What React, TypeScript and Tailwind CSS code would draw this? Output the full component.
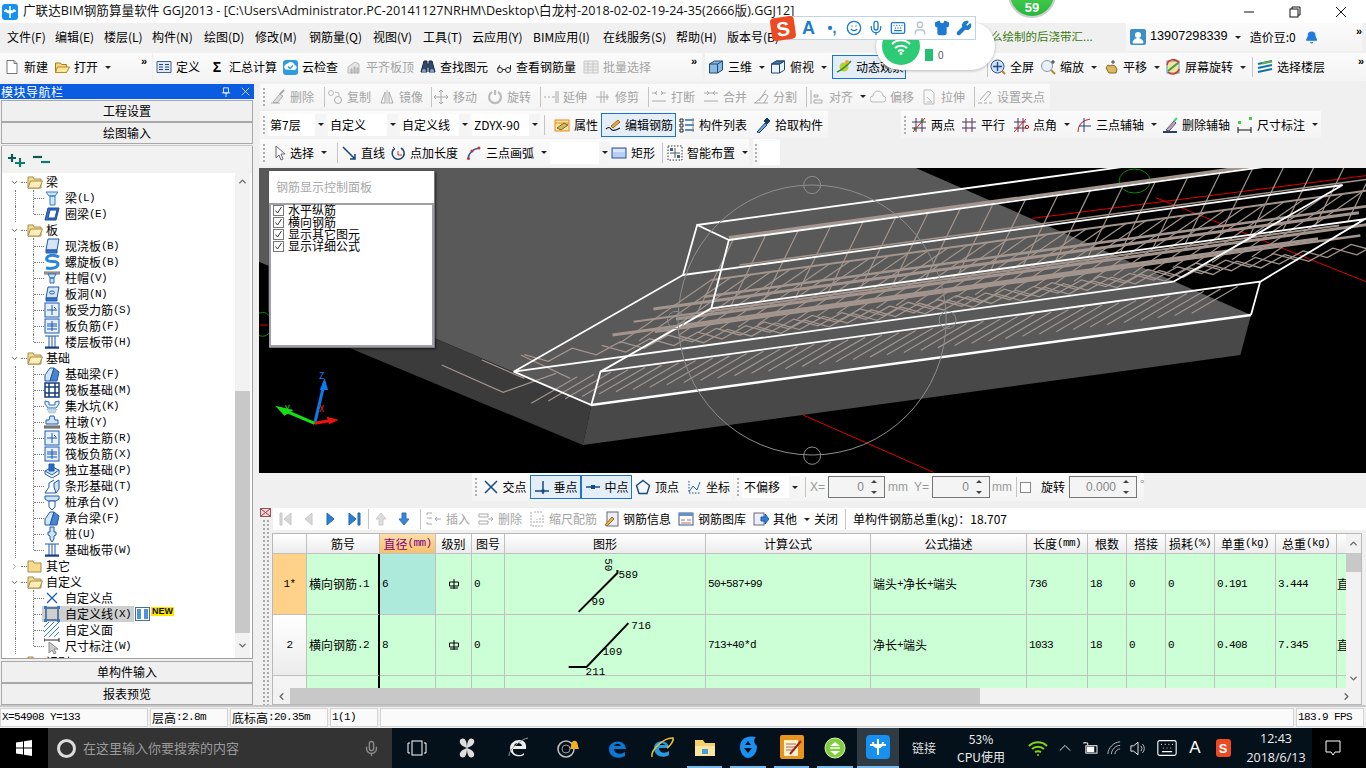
import React from "react";
import { Smile, Mic, Keyboard, Shirt, Wrench, User, Bell, ChevronUp, ChevronDown, ChevronLeft, ChevronRight } from "lucide-react";

const CJK = "'Noto Sans CJK SC','Liberation Sans',sans-serif";
const P = ({ d, c = "#1f5fae", w = 1, f = "none" }: { d: string; c?: string; w?: number; f?: string }) => (
  <path d={d} stroke={c} strokeWidth={w} fill={f} />
);
const ICONS: Record<string, React.ReactNode> = {
  new: <><P d="M3 1.5h7l3 3v10H3z" c="#777" f="#fff" /><P d="M10 1.5v3h3" c="#777" /></>,
  open: <><P d="M1.5 4h5l1 1.5h5v8h-11z" c="#a67c20" f="#f5d77a" /><P d="M3.5 8h12l-3 5.5h-11z" c="#b58a2a" f="#fbe69a" /></>,
  def: <><P d="M1 2.5h14v11H1z" c="#44618c" f="#dfe9f6" /><P d="M3 5.5h4M3 8h4M3 10.5h4M9 5.5h4M9 8h4M9 10.5h4" c="#24406e" /></>,
  cloud: <><rect x="1" y="1" width="15" height="15" rx="3" fill="#2f9ae0" /><P d="M3.5 10a3 3 0 0 1 2-5 4 4 0 0 1 7 1.5 2 2 0 0 1-.5 4z" c="#fff" f="#fff" /><P d="M6 7.5l2 2 3-3" c="#2f9ae0" w={1.3} /></>,
  flat: <><P d="M2 8l7-5 4 2v9H2z" c="#bbb" f="#e4e4e4" /><P d="M5 10h1v4H5zM8 8h1v6H8zM11 9h1v5h-1z" c="#aaa" /></>,
  find: <><P d="M4 2h3v3h2V2h3l3 11H9V8H7v5H1z" c="#1b2a40" f="#33496b" /><circle cx="4" cy="12" r="2" fill="#7da0cc" /><circle cx="12" cy="12" r="2" fill="#7da0cc" /></>,
  see: <><circle cx="4" cy="11" r="2.5" fill="none" stroke="#222" /><circle cx="12" cy="11" r="2.5" fill="none" stroke="#222" /><P d="M6.5 10.5h3M1.5 10L4 6M14.5 10V6" c="#222" /></>,
  batch: <><P d="M1 2h14v12H1z" c="#c8c8c8" f="#eee" /><P d="M1 5h14M1 8h14M1 11h14M5 2v12M10 2v12" c="#c8c8c8" /></>,
  cube: <><P d="M1.5 5l5-3h8v9l-5 3h-8z" c="#24476f" f="#86bbe6" /><P d="M1.5 5h8v9M9.5 5l5-3" c="#24476f" /></>,
  cubew: <><P d="M1.5 5l5-3h8v9l-5 3h-8z" c="#24476f" f="#e7f2fb" /><P d="M1.5 5h8v9M9.5 5l5-3" c="#24476f" /><P d="M1.5 5l5-3h8l-5 3z" c="#24476f" f="#3f78ad" /></>,
  orbit: <><circle cx="8" cy="8" r="4.5" fill="#b8d034" /><P d="M1 13Q8 10 15 2" c="#2f8f3a" w={1.6} /><circle cx="11" cy="3" r="2" fill="#e7a92a" /></>,
  full: <><circle cx="7.5" cy="7.5" r="6.5" fill="#cfe0f5" stroke="#2f548f" /><P d="M7.5 3v9M3 7.5h9" c="#1d4a8a" w={1.4} /><P d="M12 12l3 3" c="#b88824" w={2} /></>,
  zoom: <><circle cx="7" cy="7" r="5.5" fill="#e7f1fb" stroke="#8a97a8" /><P d="M11 11l4 4" c="#b88824" w={2} /><P d="M13 1v4M11 3h4" c="#333" /></>,
  hand: <><P d="M3 9l2-3 2 1 2-1 3 1 2 3-1 4H6z" c="#8c6a22" f="#dcb85f" /><P d="M10 1v4M8 3h4" c="#444" /></>,
  rot: <><rect x="2" y="2" width="12" height="12" fill="#f2e39f" stroke="#4f9bd1" /><P d="M3 12L13 4" c="#3e9f41" w={2} /><P d="M2 6a6.5 6.5 0 0 1 12-2" c="#d5362a" w={1.5} /><P d="M14 10a6.5 6.5 0 0 1-11 3" c="#d5362a" w={1.5} /></>,
  floor: <><P d="M1 5l14-3M1 9l14-3M1 13l14-3" c="#0e72a8" w={2} /><P d="M5 4.5l10-2" c="#6aa84f" w={2} /></>,
  user: <><rect width="16" height="16" rx="2" fill="#3e8fc9" /><circle cx="8" cy="6" r="3" fill="#fff" /><P d="M3 14c0-6 10-6 10 0z" c="#fff" f="#fff" /></>,
  del: <><P d="M1 14h9M3 13l7-8 3 2-6 7z" c="#aaa" f="#ddd" /><P d="M10 5l4-4" c="#aaa" w={2} /></>,
  copy: <><circle cx="4" cy="4" r="2.5" fill="none" stroke="#bbb" /><circle cx="11" cy="11" r="3.5" fill="none" stroke="#aaa" /><P d="M8 3l4 1v3" c="#bbb" /></>,
  mir: <><P d="M2 14L6 3v11zM14 14L10 3v11z" c="#aaa" /><P d="M8 1v14" c="#bbb" /></>,
  move: <P d="M8 1v14M1 8h14M6 3l2-2 2 2M6 13l2 2 2-2M3 6L1 8l2 2M13 6l2 2-2 2" c="#aaa" />,
  spin: <P d="M5 3a6 6 0 1 0 6 0M8 1v5" c="#bbb" w={2.2} />,
  ext: <P d="M1 8h2M5 8h2M9 8h3M13 2v12M15 2v12" c="#aaa" />,
  trim: <P d="M1 8h13M6 2v12M9 2v12M12 5v6" c="#aaa" />,
  brk: <P d="M1 4h5M10 4h5M1 12h14M6 2l-2 2 2 2M10 2l2 2-2 2" c="#aaa" />,
  mrg: <P d="M1 4h14M1 12h14M4 2l2 2-2 2M12 2l-2 2 2 2" c="#aaa" />,
  spl: <P d="M1 14h14M2 14l10-9 3 2-4 7M13 1L6 12" c="#aaa" />,
  ali: <P d="M2 1v14M5 6h4v2H5zM5 11h8v3H5z" c="#aaa" />,
  off: <P d="M3 13a3 3 0 0 1 0-6 5 5 0 0 1 10 0 3 3 0 0 1 0 6z" c="#bbb" />,
  str: <P d="M3 1h7l3 3v11H3zM6 8l5 5M6 13h5" c="#bbb" />,
  gp: <P d="M1 14h4M7 14h3M12 14h3M3 11l8-9 3 2-7 8" c="#aaa" />,
  prop: <><rect x="1" y="3" width="14" height="11" fill="#fde2a0" stroke="#e58a1f" /><P d="M1 6h14" c="#e58a1f" /><P d="M3 11l7-5 4 2-7 5z" c="#7a6a2a" f="#d2b660" /></>,
  edit: <><P d="M1 12q3-3 5 0t9-1" c="#111" w={1.2} /><P d="M6 9l7-6 2 2-7 6z" c="#a67020" f="#e6a540" /></>,
  list: <><P d="M1 2h3v3H1zM1 7h3v3H1zM1 12h3v3H1z" c="#222" /><P d="M6 3h9M6 8h9M6 13h9" c="#2a6cb0" w={1.5} /><P d="M14 1v14" c="#888" /></>,
  pick: <><P d="M2 15l8-9 2 2-8 8z" c="#1d3f74" f="#6fa7de" /><P d="M9 4l3-3 3 3-3 3z" c="#1d3f74" f="#16355f" /></>,
  two: <><P d="M1 5h14M1 11h14" c="#1d3f74" /><P d="M5 1v14M11 1v14" c="#7a2040" /><P d="M2 15L14 1" c="#d22" /><circle cx="4" cy="12" r="1.4" fill="#3a7a2a" /><circle cx="11" cy="4" r="1.4" fill="#3a7a2a" /></>,
  para: <><P d="M1 5h14M1 11h14" c="#1d3f74" /><P d="M5 1v14M11 1v14" c="#7a2040" /></>,
  ang: <><P d="M1 5h12M1 11h12" c="#1d3f74" /><P d="M5 1v14M10 1v14" c="#7a2040" /><P d="M1 15L13 2" c="#d22" /><circle cx="14" cy="10" r="1.6" fill="none" stroke="#c00" /></>,
  arc3: <><P d="M2 15Q2 4 14 2" c="#c22" /><P d="M8 1v14M3 9h12" c="#1d3f74" /></>,
  delx: <><P d="M1 15h14" c="#246" w={2} /><P d="M4 13l8-9 2 2-7 8z" c="#555" f="#c9a0d8" /><P d="M12 4l3-3" c="#3d6" w={2} /></>,
  dim: <><P d="M1 13h13M1 10v6M14 10v6" c="#111" /><rect x="1" y="4" width="3" height="3" fill="#4c4" /><rect x="12" y="0" width="3" height="3" fill="#4c4" /></>,
  arrow: <P d="M4 1v12l3-3 2 5 2-1-2-5h4z" c="#667" f="#fff" />,
  line: <><P d="M2 2l12 12M9 14h5V9" c="#13467c" w={1.5} /></>,
  plen: <><P d="M11 3a6 6 0 1 1-7 1" c="#244a7a" w={1.6} /><P d="M8 6v4h4" c="#c33" /><P d="M3 2l2 2-3 1" c="#244a7a" /></>,
  arc: <><P d="M2 14Q3 5 13 3" c="#2a5a9a" w={1.5} /><circle cx="2.5" cy="13.5" r="1.5" fill="#c33" /><circle cx="6" cy="6" r="1.5" fill="#c33" /><circle cx="13" cy="3" r="1.5" fill="#c33" /></>,
  rect: <><rect x="1" y="3" width="14" height="10" fill="#b8cff4" stroke="#2a4f96" /><rect x="2" y="4" width="12" height="3" fill="#dbe6fa" /></>,
  smart: <><rect x="1" y="1" width="14" height="14" fill="#fff" stroke="#333" strokeDasharray="1.5 1.5" /><P d="M8 3v10M3 8h10" c="#555" /><rect x="3" y="3" width="3" height="3" fill="#3a63a8" /><rect x="10" y="10" width="3" height="3" fill="#3a63a8" /></>,
  cross: <P d="M2 2l12 12M14 2L2 14" c="#134b86" w={1.5} />,
  perp: <><P d="M1 12h14M9 2v13" c="#134b86" w={1.5} /><rect x="7.5" y="10.5" width="3" height="3" fill="#134b86" /></>,
  mid: <><P d="M1 8h14" c="#134b86" w={1.5} /><rect x="6" y="6" width="4" height="4" fill="#134b86" /></>,
  pent: <P d="M8 1.5l6.5 5-2.5 8H4l-2.5-8z" c="#134b86" w={1.4} />,
  coord: <><P d="M3 13l4-6 4 4 3-8" c="#2a6db0" /><path d="M3 2v12h11" stroke="#134b86" fill="none" strokeDasharray="1.5 1.5" /></>,
  first: <><P d="M3 2h2v12H3zM14 2L7 8l7 6z" c="#c8c8c8" f="#d8d8d8" /></>,
  prev: <P d="M12 2L5 8l7 6z" c="#c8c8c8" f="#d8d8d8" />,
  next: <P d="M4 2l7 6-7 6z" c="#1c68b8" f="#2a7fd4" />,
  last: <><P d="M2 2l7 6-7 6zM11 2h2v12h-2z" c="#1c68b8" f="#2a7fd4" /></>,
  up: <P d="M8 2l5 6H10v6H6V8H3z" c="#ccc" f="#ddd" />,
  down: <P d="M6 2h4v6h3l-5 6-5-6h3z" c="#2a6fc0" f="#3a86d8" />,
  ins: <P d="M1 2h5M1 7h5M1 13h5M1 2v2M1 11v2M9 8h6M9 8l2-2M9 8l2 2" c="#aaa" />,
  rm: <P d="M1 3h9v3H1zM1 10h9v3H1zM10 8h5M13 6l2 2-2 2" c="#aaa" />,
  scl: <path d="M2 1v14h13M5 12v-2M8 12V8M11 12V6M14 12V4M5 1h9" stroke="#aaa" fill="none" strokeDasharray="2 1" />,
  info: <><rect x="4" y="1" width="11" height="14" fill="#eef" stroke="#667" /><P d="M2 14l7-8 2 2-7 7z" c="#a06a20" f="#e6b450" /></>,
  lib: <><rect x="1" y="2" width="14" height="12" fill="#fff" stroke="#33588a" /><rect x="1" y="2" width="14" height="3" fill="#6a91c5" /><P d="M3 9h4M9 9h4M3 12h10" c="#b66" /></>,
  other: <><rect x="1" y="2" width="10" height="12" fill="#eef" stroke="#667" /><P d="M8 6h4V3l4 5-4 5v-3H8z" c="#1a5fb0" f="#2f7fd0" /></>,
  tBeam: <><P d="M2 2h12l-3 4H5zM6 6h5v9H6z" c="#2a7fd0" f="#cfe6fb" /></>,
  tRing: <><P d="M4 2h11l-3 12H1z" c="#154a9c" f="#3b71c6" /><P d="M6 4h7l-2 8H4z" c="#154a9c" f="#fff" /></>,
  tSlab: <><P d="M4 1h11l-2 11H2z" c="#1a5bb0" f="#d6e6fa" /><P d="M2 12h11v3H2z" c="#1a5bb0" f="#3b71c6" /></>,
  tSpir: <P d="M15 3C7-1 1 3 3 6s11 0 11 4-6 5-12 4" c="#2a86dd" w={3} />,
  tCap: <><P d="M0 2h16v2H0z" c="#777" f="#aaa" /><P d="M4 4h8l-2 4H6zM6 8h4v5H6z" c="#2a6cc0" f="#cfe2f8" /></>,
  tHole: <><P d="M4 1h11l-2 11H2z" c="#1a5bb0" f="#d6e6fa" /><P d="M2 12h11v3H2z" c="#1a5bb0" f="#3b71c6" /><ellipse cx="8" cy="6.5" rx="2.5" ry="1.5" fill="none" stroke="#1a5bb0" /></>,
  tBar: <><rect x="1" y="1" width="14" height="14" fill="#e6f0fb" stroke="#1a5bb0" /><P d="M8 3v10M3 8h10M10 5l2 2" c="#1a5bb0" /></>,
  tNeg: <><rect x="1" y="1" width="14" height="14" fill="#e6f0fb" stroke="#1a5bb0" /><P d="M3 8h10M3 6h10M8 3v10M3 11h10" c="#1a5bb0" /></>,
  tBand: <><P d="M1 2h14M1 14h14M5 2v12M11 2v12M8 2v12" c="#1a5bb0" /><P d="M1 13.5h14" c="#1a3f80" w={2} /></>,
  tFb: <><P d="M1 15V9l5-7h4L6 15z" c="#1a5bb0" f="#d6e6fa" /><P d="M10 2l5 4-2 9H6z" c="#1a5bb0" f="#4a84d0" /></>,
  tRaft: <><rect x="1" y="1" width="14" height="14" fill="#fff" stroke="#173e7a" strokeWidth="1.5" /><P d="M1 5h14M1 11h14M5 1v14M11 1v14" c="#173e7a" w={1.5} /></>,
  tPit: <><P d="M1 3l4 1v3h6V4l4-1v3l-3 4H4L1 6z" c="#2a6cc0" f="#e6f0fb" /><path d="M3 11h10l-2 4H5z" stroke="#8bb" fill="#c6d8ec" strokeDasharray="1 1" /></>,
  tPier: <><P d="M6 2h4l1 4h3v4H2V6h3z" c="#1a5bb0" f="#cfe2f8" /><P d="M0 12h16v2H0z" c="#555" f="#999" /></>,
  tInd: <><P d="M1 9l7-4 7 3-7 5z" c="#1a5bb0" f="#cfe2f8" /><P d="M1 9v3l7 4 7-4V8" c="#1a5bb0" /><P d="M5 2h5v7H5z" c="#1a5bb0" f="#2a6cc0" /></>,
  tStrip: <><P d="M1 15h11l-2-6V5l5-3v9l-3 4" c="#1a5bb0" f="#cfe2f8" /><P d="M1 15l4-6V5l5-3" c="#1a5bb0" /></>,
  tPile: <><P d="M1 2h14v3l-3 2H4L1 5z" c="#1a5bb0" f="#cfe2f8" /><P d="M5 7h6v6l-3 3-3-3z" c="#1a5bb0" f="#fff" /></>,
  tPin: <><P d="M6 1h4v5h2v3l-2 1v3l-2 3-2-3v-3L4 9V6h2z" c="#1a5bb0" f="#cfe2f8" /></>,
  tPt: <P d="M3 3l10 10M13 3L3 13" c="#1c5cb0" w={1.3} />,
  tLine: <><rect x="2" y="2" width="12" height="12" fill="none" stroke="#173e7a" strokeWidth="1.2" /><rect x="0" y="0" width="3" height="3" fill="#2a7fd0" /><rect x="13" y="0" width="3" height="3" fill="#2a7fd0" /><rect x="0" y="13" width="3" height="3" fill="#2a7fd0" /><rect x="13" y="13" width="3" height="3" fill="#2a7fd0" /></>,
  tFace: <P d="M0 5l5-5M0 10L10 0M0 15L15 0M5 15L15 5M10 15l5-5" c="#2a7fd0" />,
  tDim: <><P d="M0 2h15M0 0v4M15 0v4" c="#222" /><P d="M5 4v11l3-3 2 4 2-1-2-4h4z" c="#888" f="#ccc" /></>,
};

const Ico = ({ n, cls = "" }: { n: string; cls?: string }) => (
  <svg viewBox="0 0 16 16" className={"w-[16px] h-[16px] shrink-0 " + cls}>{ICONS[n]}</svg>
);

const Caret = ({ cls = "ml-[7px]" }: { cls?: string }) => (
  <span className={"shrink-0 w-0 h-0 border-l-[3px] border-r-[3px] border-t-[3px] border-l-transparent border-r-transparent border-t-[#222] " + cls} />
);
const Sep = ({ w }: { w: string }) => (
  <div className={"h-[20px] flex justify-center shrink-0 " + w}><div className="w-px h-full bg-[#c4c4c4]" /></div>
);
const Grip = () => (
  <div className="w-[3px] h-[18px] mx-[2px] shrink-0 flex flex-col justify-between">
    {[0, 1, 2, 3, 4].map((i) => <div key={i} className="w-[2px] h-[2px] bg-[#b0b0b0]" />)}
  </div>
);
const More = ({ cls = "" }: { cls?: string }) => (
  <span className={"text-[11px] font-bold leading-none text-black self-start mt-[3px] " + cls} style={{ fontFamily: "'Liberation Sans',sans-serif" }}>»</span>
);

type ToolP = { i?: string; t: string; w: string; caret?: boolean; dis?: boolean; sel?: boolean; g?: React.ReactNode };
const Tool = ({ i, t, w, caret, dis, sel, g }: ToolP) => (
  <div className={"flex items-center shrink-0 h-[24px] whitespace-nowrap text-[12px] " + w + (dis ? " text-[#a4a4a4]" : " text-black") + (sel ? " border border-[#1a76c8] bg-[#e4eef8] pl-[3px]" : "")}>
    {g ?? <Ico n={i as string} />}
    <span className="ml-[4px]">{t}</span>
    {caret && <Caret />}
  </div>
);
const Bar = ({ children, cls }: { children: React.ReactNode; cls: string }) => (
  <div className={"flex items-center shrink-0 bg-gradient-to-b from-[#fbfbfb] to-[#f4f4f4] " + cls}>{children}</div>
);
const Drop = ({ t, w, tcls = "" }: { t: string; w: string; tcls?: string }) => (
  <div className={"flex items-center shrink-0 h-[22px] " + w}>
    <div className={"flex-1 h-full bg-white flex items-center pl-[2px] whitespace-nowrap overflow-hidden text-[12px] text-black " + tcls}>{t}</div>
    <div className="w-[11px] h-full bg-[#f4f4f4] flex items-center justify-center"><Caret cls="" /></div>
  </div>
);

const Sim = ({ t }: { t: string }) => (
  <>
    {t.split(/([\x00-\x7f]+)/).map((s, k) =>
      /^[\x00-\x7f]+$/.test(s) ? (
        <span key={k} className="text-[11px] tracking-[-0.6px]" style={{ fontFamily: "'Liberation Mono',monospace" }}>{s}</span>
      ) : (
        <span key={k}>{s}</span>
      )
    )}
  </>
);

type TreeRow = { f?: string; open?: boolean; i?: string; t?: string; last?: boolean };
const TREE: TreeRow[] = [
  { f: "梁", open: true }, { i: "tBeam", t: "梁(L)" }, { i: "tRing", t: "圈梁(E)", last: true },
  { f: "板", open: true }, { i: "tSlab", t: "现浇板(B)" }, { i: "tSpir", t: "螺旋板(B)" }, { i: "tCap", t: "柱帽(V)" }, { i: "tHole", t: "板洞(N)" }, { i: "tBar", t: "板受力筋(S)" }, { i: "tNeg", t: "板负筋(F)" }, { i: "tBand", t: "楼层板带(H)", last: true },
  { f: "基础", open: true }, { i: "tFb", t: "基础梁(F)" }, { i: "tRaft", t: "筏板基础(M)" }, { i: "tPit", t: "集水坑(K)" }, { i: "tPier", t: "柱墩(Y)" }, { i: "tBar", t: "筏板主筋(R)" }, { i: "tNeg", t: "筏板负筋(X)" }, { i: "tInd", t: "独立基础(P)" }, { i: "tStrip", t: "条形基础(T)" }, { i: "tPile", t: "桩承台(V)" }, { i: "tFb", t: "承台梁(F)" }, { i: "tPin", t: "桩(U)" }, { i: "tBand", t: "基础板带(W)", last: true },
  { f: "其它", open: false },
  { f: "自定义", open: true }, { i: "tPt", t: "自定义点" }, { i: "tLine", t: "自定义线(X)" }, { i: "tFace", t: "自定义面" }, { i: "tDim", t: "尺寸标注(W)", last: true },
  { f: "识别", open: true },
];

const Folder = ({ open }: { open?: boolean }) => (
  <svg viewBox="0 0 16 14" className="w-[16px] h-[14px] shrink-0">
    <path d="M1 2h5l1 2h7v9H1z" fill="#f4dc8c" stroke="#a98c48" />
    {open && <path d="M3.5 6H15.5l-3 7H1z" fill="#fbeebb" stroke="#a98c48" />}
  </svg>
);
const dotV = "border-l border-dotted border-[#777]";

function Tree() {
  return (
    <div className="flex-1 overflow-hidden text-[12px] text-black pt-px">
      {TREE.map((r, k) =>
        r.f ? (
          <div key={k} className="flex items-center h-[16px]">
            <div className="w-[8px]" />
            <span className="w-[9px] flex justify-center">
              {r.open ? <ChevronDown size={11} strokeWidth={2.5} color="#555" /> : <ChevronRight size={11} strokeWidth={2.5} color="#aaa" />}
            </span>
            <div className="w-[6px] ml-[2px] border-t border-dotted border-[#777]" />
            <Folder open={r.open} />
            <span className="ml-[3px]">{r.f}</span>
          </div>
        ) : (
          <div key={k} className="flex items-center h-[16px]">
            <div className="w-[13px]" />
            <div className={"h-full w-px " + dotV} />
            <div className="w-[17px]" />
            <div className={"w-px self-start " + dotV + (r.last ? " h-[8px]" : " h-full")} />
            <div className="w-[10px] border-t border-dotted border-[#777]" />
            <Ico n={r.i as string} cls={r.i === "tLine" ? "relative z-10" : ""} />
            <span className={"h-full flex items-center whitespace-nowrap " + (r.i === "tLine" ? "bg-[#cfcfcf] pr-[3px] -ml-[18px] pl-[23px]" : "pl-[5px]")}>
              <Sim t={r.t as string} />
            </span>
            {r.i === "tLine" && (
              <>
                <svg viewBox="0 0 15 14" className="w-[15px] h-[14px] ml-px shrink-0"><rect x="0.5" y="0.5" width="14" height="13" fill="#fff" stroke="#4a6e9c" /><path d="M2 2h4v10H2zM9 2h4v10H9z" fill="#4f93db" /></svg>
                <span className="text-[9px] font-bold leading-none text-[#111] bg-[#ffe600] px-px -mt-[6px] ml-px" style={{ fontFamily: "'Liberation Sans',sans-serif" }}>NEW</span>
              </>
            )}
          </div>
        )
      )}
    </div>
  );
}

const NavBtn = ({ t, cls = "" }: { t: string; cls?: string }) => (
  <div className={"h-[22px] mx-px border border-[#a8a8a8] bg-[#f0f0f0] flex items-center justify-center text-[12px] text-black " + cls}>{t}</div>
);

function LeftPanel() {
  return (
    <div className="w-[254px] shrink-0 flex flex-col h-full">
      <div className="h-[15px] bg-[#0a5de0] text-white text-[12px] flex items-center pl-px tracking-[0.5px] shrink-0">
        <span className="flex-1">模块导航栏</span>
        <svg viewBox="0 0 12 12" className="w-[10px] h-[10px] mr-[10px]"><path d="M3 1h6v6H3zM1 7h10M6 7v5" stroke="#fff" fill="none" /></svg>
        <svg viewBox="0 0 12 12" className="w-[9px] h-[9px] mr-[4px]"><path d="M1 1l10 10M11 1L1 11" stroke="#fff" /></svg>
      </div>
      <div className="h-px shrink-0" />
      <NavBtn t="工程设置" />
      <NavBtn t="绘图输入" />
      <div className="flex-1 mx-px mt-px border border-[#a0a0a0] border-t-[#c8c8c8] bg-white flex flex-col min-h-0 rounded-t-[2px]">
        <div className="h-[27px] bg-[#f2f2f2] flex items-center pl-[6px] gap-[7px] shrink-0">
          <svg viewBox="0 0 18 14" className="w-[18px] h-[14px]"><path d="M0 5h8M4 1v8" stroke="#0e5a50" strokeWidth="2.2" /><path d="M7 10h10M12 5v9" stroke="#0e7a70" strokeWidth="2.2" /></svg>
          <svg viewBox="0 0 18 14" className="w-[18px] h-[14px]"><path d="M0 4h9" stroke="#0e5a50" strokeWidth="2.2" /><path d="M8 9h9" stroke="#0e7a70" strokeWidth="2.2" /></svg>
        </div>
        <div className="flex-1 flex min-h-0 overflow-hidden">
          <Tree />
          <div className="w-[15px] mr-[2px] shrink-0 bg-[#f2f2f2] flex flex-col">
            <div className="h-[17px] flex items-center justify-center"><ChevronUp size={11} strokeWidth={3} color="#666" /></div>
            <div className="h-[201px]" />
            <div className="flex-1 bg-[#c8c8c8]" />
            <div className="h-[25px] flex items-center justify-center"><ChevronDown size={11} strokeWidth={3} color="#666" /></div>
          </div>
        </div>
      </div>
      <NavBtn t="单构件输入" cls="mt-[2px]" />
      <NavBtn t="报表预览" />
    </div>
  );
}

const range = (n: number) => Array.from({ length: n }, (_, i) => i);
const S = -0.2888;
const NS = "non-scaling-stroke" as const;
function Scene() {
  const rebar = "#a3958d";
  return (
    <svg viewBox="-1 9 1569 915" preserveAspectRatio="none" className="w-full h-full block">
      <rect x="-1" y="9" width="1569" height="915" fill="#000" />
      <polygon points="-1,9 930,9 1405,450 470,720 248,520 -1,290" fill="#595959" />
      <polygon points="12,300 248,520 470,720 458,840 140,560 12,440" fill="#3b3b3b" />
      <polygon points="470,720 1405,450 1390,570 458,840" fill="#484848" />
      <g fill="none">
        <path d="M770 750L955 922M1095 160L1568 32M1270 98L1568 350M0 480H12" stroke="#e00000" vectorEffect={NS} />
        <ellipse cx="1240" cy="48" rx="22" ry="36" stroke="#0a8a0a" vectorEffect={NS} />
        <ellipse cx="4" cy="478" rx="14" ry="36" stroke="#0a8a0a" vectorEffect={NS} />
        {range(22).map((i) => {
          const x = 672 + i * 46, y = 220 + S * i * 46;
          return <path key={"a" + i} d={`M${x} ${y}L${x - 50} ${y + 215}`} stroke={rebar} strokeWidth="1.2" vectorEffect={NS} />;
        })}
        {range(34).map((i) => {
          const x = 640 + i * 28, y = 345 + S * i * 28;
          return <path key={"b" + i} d={`M${x} ${y}L${x - 130} ${y + 190}`} stroke={rebar} strokeWidth="1.2" vectorEffect={NS} />;
        })}
        {range(40).map((i) => {
          const x = 450 + i * 24, y = 635 + S * i * 24;
          return <path key={"c" + i} d={`M${x} ${y}L${x - 65} ${y + 80}`} stroke={rebar} strokeWidth="1.2" vectorEffect={NS} />;
        })}
        {[0, 1, 2, 3].map((r) => (
          <polyline key={r} points={range(30).map((i) => { const x = 375 + r * 110 + i * 34, y = 575 - r * 28 + S * i * 34 + (i % 2 ? 24 : -6); return `${x},${y}`; }).join(" ")} stroke={rebar} strokeWidth="1.3" vectorEffect={NS} />
        ))}
        <path d="M258 600L345 682L420 625M315 585L375 640M370 570L440 640" stroke={rebar} strokeWidth="1.2" vectorEffect={NS} />
        {[[665, 218, 3.2], [558, 432, 3], [500, 510, 3], [590, 462, 3], [630, 395, 2.5], [640, 345, 2], [560, 500, 2.5], [530, 470, 2], [680, 300, 1.5]].map(([x, y, w], k) => (
          <path key={k} d={`M${x} ${y}L${x + 1000} ${y + S * 1000}`} stroke={rebar} strokeWidth={w} vectorEffect={NS} />
        ))}
        <g stroke="#fff">
          <path d="M470 720L1405 450" strokeWidth="2.5" vectorEffect={NS} />
          <path d="M360 620L470 720L483 620L640 430L665 225L620 180L600 330L360 620" strokeWidth="1.8" vectorEffect={NS} />
          <path d="M360 620L1295 350M483 620L1418 350L1405 450M640 430L1575 160M600 330L1535 60M620 180L1555 -90M665 225L1600 -45M1418 350L1568 160M1295 350L1535 60" strokeWidth="1.8" vectorEffect={NS} />
        </g>
        <g stroke="#8e8e8e">
          <ellipse cx="783" cy="465" rx="190" ry="405" vectorEffect={NS} />
          <ellipse cx="783" cy="60" rx="12" ry="26" vectorEffect={NS} />
          <ellipse cx="783" cy="872" rx="12" ry="26" vectorEffect={NS} />
          <ellipse cx="590" cy="465" rx="12" ry="26" vectorEffect={NS} />
          <ellipse cx="975" cy="465" rx="12" ry="26" vectorEffect={NS} />
        </g>
        <path d="M78 775L92 650" stroke="#0a7af0" strokeWidth="3" vectorEffect={NS} />
        <path d="M85 675L92 640L97 675z" fill="#0a7af0" />
        <path d="M78 775L30 732" stroke="#12e012" strokeWidth="3" vectorEffect={NS} />
        <path d="M22 722L48 735L35 752z" fill="#12e012" />
        <path d="M78 775L105 765" stroke="#f01010" strokeWidth="3" vectorEffect={NS} />
        <path d="M95 755L112 765L98 778z" fill="#f01010" />
      </g>
    </svg>
  );
}

const Chk = ({ t }: { t: string }) => (
  <div className="flex items-center h-[12px] whitespace-nowrap">
    <svg viewBox="0 0 11 11" className="w-[11px] h-[11px] shrink-0"><rect x="0.5" y="0.5" width="10" height="10" fill="#fff" stroke="#777" /><path d="M2.5 5.5l2 2.5 4-6" stroke="#333" fill="none" /></svg>
    <span className="ml-[4px]">{t}</span>
  </div>
);

const COLS = "grid-cols-[34px_73px_56px_36px_33px_201px_165px_156px_61px_39px_39px_49px_61px_61px_11px]";
const HEAD = ["", "筋号", "直径(mm)", "级别", "图号", "图形", "计算公式", "公式描述", "长度(mm)", "根数", "搭接", "损耗(%)", "单重(kg)", "总重(kg)", ""];
const cell = "border-r border-b border-[#c0c0c0] flex items-center px-[2px] whitespace-nowrap overflow-hidden text-[12px] text-black";
const Fig1 = () => (
  <svg viewBox="0 0 201 60" className="w-full h-full">
    <path d="M74 58L113 19l0-3" stroke="#000" strokeWidth="2" fill="none" />
    <text x="114" y="24" fontSize="11" fontFamily="'Liberation Mono',monospace">589</text>
    <text x="87" y="51" fontSize="11" fontFamily="'Liberation Mono',monospace">99</text>
    <text x="0" y="0" fontSize="11" fontFamily="'Liberation Mono',monospace" transform="translate(101,4) rotate(90)">50</text>
  </svg>
);
const Fig2 = () => (
  <svg viewBox="0 0 201 60" className="w-full h-full">
    <path d="M64 52H82L124 8" stroke="#000" strokeWidth="2" fill="none" />
    <text x="127" y="14" fontSize="11" fontFamily="'Liberation Mono',monospace">716</text>
    <text x="98" y="40" fontSize="11" fontFamily="'Liberation Mono',monospace">109</text>
    <text x="81" y="60" fontSize="11" fontFamily="'Liberation Mono',monospace">211</text>
  </svg>
);
const Row = ({ n, d, name, fig, f, desc, len, w1, w2, sel }: { n: string; d: string; name: string; fig: React.ReactNode; f: string; desc: string; len: string; w1: string; w2: string; sel?: boolean }) => (
  <div className={"grid h-[61px] shrink-0 " + COLS}>
    <div className={cell + " justify-center " + (sel ? "bg-[#ffd28a] text-[#800080]" : "bg-gradient-to-b from-white to-[#ececec]")}><Sim t={n} /></div>
    <div className={cell + " bg-[#ccffd6] border-r-[2px] border-r-black"}><Sim t={name} /></div>
    <div className={cell + (sel ? " bg-[#aeeadb]" : " bg-[#ccffd6]")}><Sim t={d} /></div>
    <div className={cell + " bg-[#ccffd6] justify-center"}>
      <svg viewBox="0 0 10 10" className="w-[10px] h-[10px]"><path d="M0.5 3h9v4h-9zM5 0v10M1 9h8" stroke="#000" fill="none" /></svg>
    </div>
    <div className={cell + " bg-[#ccffd6]"}><Sim t="0" /></div>
    <div className={cell + " bg-[#ccffd6] !px-0"}>{fig}</div>
    <div className={cell + " bg-[#ccffd6]"}><Sim t={f} /></div>
    <div className={cell + " bg-[#ccffd6]"}><Sim t={desc} /></div>
    <div className={cell + " bg-[#ccffd6]"}><Sim t={len} /></div>
    <div className={cell + " bg-[#ccffd6]"}><Sim t="18" /></div>
    <div className={cell + " bg-[#ccffd6]"}><Sim t="0" /></div>
    <div className={cell + " bg-[#ccffd6]"}><Sim t="0" /></div>
    <div className={cell + " bg-[#ccffd6]"}><Sim t={w1} /></div>
    <div className={cell + " bg-[#ccffd6]"}><Sim t={w2} /></div>
    <div className={cell + " bg-[#ccffd6] !px-0"}>直</div>
  </div>
);

function Grid() {
  return (
    <div className="flex-1 border border-[#b8b8b8] bg-white flex flex-col min-w-0 mr-[4px] mt-[3px]">
      <div className="flex-1 flex min-h-0">
        <div className="flex-1 flex flex-col overflow-hidden min-w-0">
          <div className={"grid h-[20px] shrink-0 " + COLS}>
            {HEAD.map((h, k) => (
              <div key={k} className={"border-r border-b border-[#c0c0c0] flex items-center justify-center text-[12px] whitespace-nowrap overflow-hidden " + (k === 2 ? "bg-gradient-to-b from-[#fddfa8] to-[#f6c06c] text-[#800080]" : "bg-gradient-to-b from-white to-[#ececec] text-black")}>
                <Sim t={h} />
              </div>
            ))}
          </div>
          <Row sel n="1*" d="6" name="横向钢筋.1" fig={<Fig1 />} f="50+587+99" desc="端头+净长+端头" len="736" w1="0.191" w2="3.444" />
          <Row n="2" d="8" name="横向钢筋.2" fig={<Fig2 />} f="713+40*d" desc="净长+端头" len="1033" w1="0.408" w2="7.345" />
          <div className={"grid flex-1 " + COLS}>
            <div className="bg-[#f4f4f4] border-r border-[#c0c0c0]" />
            <div className="bg-[#ccffd6] border-r-[2px] border-black" />
            {range(12).map((i) => <div key={i} className="bg-[#ccffd6] border-r border-[#c0c0c0]" />)}
            <div className="bg-[#ccffd6]" />
          </div>
        </div>
        <div className="w-[15px] shrink-0 bg-[#f2f2f2] flex flex-col">
          <div className="h-[19px] flex items-center justify-center"><ChevronUp size={11} strokeWidth={3} color="#666" /></div>
          <div className="h-[19px] bg-[#c8c8c8]" />
          <div className="flex-1" />
          <div className="h-[19px] flex items-center justify-center"><ChevronDown size={11} strokeWidth={3} color="#666" /></div>
        </div>
      </div>
      <div className="h-[16px] bg-[#f2f2f2] flex items-center shrink-0">
        <div className="w-[17px] flex justify-center"><ChevronLeft size={11} strokeWidth={3} color="#666" /></div>
        <div className="w-[690px] h-full bg-[#c8c8c8]" />
        <div className="flex-1" />
        <div className="w-[30px] flex justify-center"><ChevronRight size={11} strokeWidth={3} color="#666" /></div>
      </div>
    </div>
  );
}

const NumIn = ({ v, w }: { v: string; w: string }) => (
  <div className={"h-[22px] border border-[#777] bg-[#f4f4f4] flex items-center justify-end shrink-0 text-[12px] text-[#888] " + w} style={{ fontFamily: "'Liberation Sans',sans-serif" }}>
    <span>{v}</span>
    <div className="w-[20px] h-full flex flex-col items-center justify-center gap-[8px]">
      <span className="w-0 h-0 border-l-[3px] border-r-[3px] border-b-[3px] border-l-transparent border-r-transparent border-b-[#444]" />
      <span className="w-0 h-0 border-l-[3px] border-r-[3px] border-t-[3px] border-l-transparent border-r-transparent border-t-[#444]" />
    </div>
  </div>
);

const StatusCell = ({ t, w }: { t: string; w: string }) => (
  <div className={"h-[19px] border border-[#d4d4d4] bg-[#fafafa] flex items-center pl-px text-[12px] text-black overflow-hidden shrink-0 " + w}><Sim t={t} /></div>
);

const Tb = ({ children, w, cls = "" }: { children: React.ReactNode; w: string; cls?: string }) => (
  <div className={"h-full flex items-center justify-center shrink-0 " + w + " " + cls}>{children}</div>
);
const AX = "absolute text-[9px] leading-none";

export default function App() {
  return (
    <div className="w-[1366px] h-[768px] overflow-hidden bg-[#f0f0f0] flex flex-col relative" style={{ fontFamily: CJK }}>
      {/* title */}
      <div className="h-[23px] bg-white flex items-center shrink-0">
        <svg viewBox="0 0 16 16" className="w-[16px] h-[16px] ml-[2px]"><rect width="16" height="16" rx="3" fill="#1890f0" /><path d="M8 2v12M2 7h12M4 5c0 5 8 5 8 0" stroke="#fff" strokeWidth="1.5" fill="none" /></svg>
        <span className="ml-[5px] text-[12.6px] text-[#111] whitespace-nowrap" style={{ fontFamily: "'Open Sans','Noto Sans CJK SC',sans-serif" }}>
          广联达BIM钢筋算量软件 GGJ2013 - [C:\Users\Administrator.PC-20141127NRHM\Desktop\白龙村-2018-02-02-19-24-35(2666版).GGJ12]
        </span>
        <div className="flex-1" />
        <svg viewBox="0 0 103 12" className="w-[103px] h-[12px] mr-[19px]"><path d="M0 6h10" stroke="#111" /><rect x="46" y="3" width="8" height="8" fill="none" stroke="#111" /><path d="M48 3V1h8v8h-2" fill="none" stroke="#111" /><path d="M92 1l10 10M102 1L92 11" stroke="#111" /></svg>
      </div>
      {/* menu */}
      <div className="h-[31px] flex items-center shrink-0 pl-[7px] pb-[3px] text-[12px] text-black whitespace-nowrap">
        {[["文件(F)", "w-[48px]"], ["编辑(E)", "w-[49px]"], ["楼层(L)", "w-[48px]"], ["构件(N)", "w-[52px]"], ["绘图(D)", "w-[51px]"], ["修改(M)", "w-[54px]"], ["钢筋量(Q)", "w-[64px]"], ["视图(V)", "w-[50px]"], ["工具(T)", "w-[49px]"], ["云应用(Y)", "w-[61px]"], ["BIM应用(I)", "w-[70px]"], ["在线服务(S)", "w-[73px]"], ["帮助(H)", "w-[51px]"], ["版本号(B)", "w-[60px]"]].map(([t, w]) => (
          <div key={t} className={"shrink-0 " + w}>{t}</div>
        ))}
        <span className="text-[#3a7a10] ml-[204px] w-[120px] shrink-0 text-[11.5px]">么绘制的后浇带汇...</span>
        <div className="flex items-center w-[236px] h-[28px] bg-gradient-to-b from-[#fbfbfb] to-[#f4f4f4] ml-[15px] pl-[4px] shrink-0">
          <Ico n="user" />
          <span className="ml-[4px] text-[12.7px]" style={{ fontFamily: "'Liberation Sans',sans-serif" }}>13907298339</span>
          <Caret />
          <span className="ml-[9px]">造价豆:0</span>
          <Bell size={15} fill="#1f7be0" color="#1f7be0" className="ml-[9px]" />
          <More cls="ml-[38px]" />
        </div>
      </div>
      {/* toolbar 1 */}
      <div className="h-[31px] flex items-start shrink-0 -mt-px">
        <Bar cls="w-[152px] h-[28px] pl-[4px]">
          <Tool i="new" t="新建" w="w-[50px]" />
          <Tool i="open" t="打开" w="w-[60px]" caret />
          <More cls="ml-[27px]" />
        </Bar>
        <Bar cls="w-[549px] h-[28px] ml-px pl-[3px]">
          <Tool i="def" t="定义" w="w-[53px]" />
          <Tool t="汇总计算" w="w-[73px]" g={<span className="w-[16px] text-center font-bold text-[14px] leading-none" style={{ fontFamily: "'Liberation Sans',sans-serif" }}>Σ</span>} />
          <Tool i="cloud" t="云检查" w="w-[64px]" />
          <Tool i="flat" t="平齐板顶" w="w-[74px]" dis />
          <Tool i="find" t="查找图元" w="w-[76px]" />
          <Tool i="see" t="查看钢筋量" w="w-[87px]" />
          <Tool i="batch" t="批量选择" w="w-[75px]" dis />
          <More cls="ml-[33px]" />
        </Bar>
        <Bar cls="w-[661px] h-[28px] ml-[3px] pl-[3px]">
          <Tool i="cube" t="三维" w="w-[62px]" caret />
          <Tool i="cubew" t="俯视" w="w-[62px]" caret />
          <Tool i="orbit" t="动态观察" w="w-[74px]" sel />
          <div className="w-[78px] shrink-0" />
          <Sep w="w-[6px]" />
          <Tool i="full" t="全屏" w="w-[50px]" />
          <Tool i="zoom" t="缩放" w="w-[63px]" caret />
          <Tool i="hand" t="平移" w="w-[62px]" caret />
          <Tool i="rot" t="屏幕旋转" w="w-[83px]" caret />
          <Sep w="w-[9px]" />
          <Tool i="floor" t="选择楼层" w="w-[68px]" />
          <More cls="ml-[33px]" />
        </Bar>
      </div>
      {/* main */}
      <div className="flex-1 flex min-h-0">
        <LeftPanel />
        <div className="w-[5px] shrink-0" />
        <div className="flex-1 flex flex-col min-w-0">
          <div className="h-[27px] flex items-center shrink-0 pb-[2px]">
            <Bar cls="w-[790px] h-[25px] ml-px pl-[1px]">
              <Grip />
              <div className="w-[2px]" />
              <Tool i="del" t="删除" w="w-[51px]" dis />
              <Sep w="w-[6px]" />
              <Tool i="copy" t="复制" w="w-[52px]" dis />
              <Tool i="mir" t="镜像" w="w-[50px]" dis />
              <Sep w="w-[4px]" />
              <Tool i="move" t="移动" w="w-[54px]" dis />
              <Tool i="spin" t="旋转" w="w-[50px]" dis />
              <Sep w="w-[6px]" />
              <Tool i="ext" t="延伸" w="w-[52px]" dis />
              <Tool i="trim" t="修剪" w="w-[50px]" dis />
              <Sep w="w-[6px]" />
              <Tool i="brk" t="打断" w="w-[52px]" dis />
              <Tool i="mrg" t="合并" w="w-[50px]" dis />
              <Tool i="spl" t="分割" w="w-[51px]" dis />
              <Sep w="w-[5px]" />
              <Tool i="ali" t="对齐" w="w-[61px]" caret dis />
              <Tool i="off" t="偏移" w="w-[51px]" dis />
              <Tool i="str" t="拉伸" w="w-[51px]" dis />
              <Sep w="w-[5px]" />
              <Tool i="gp" t="设置夹点" w="w-[68px]" dis />
            </Bar>
          </div>
          <div className="h-[28px] flex items-start shrink-0">
            <Bar cls="w-[568px] h-[27px] ml-px pl-[1px]">
              <Grip />
              <Drop t="第7层" w="w-[58px]" />
              <Drop t="自定义" w="w-[72px]" tcls="ml-[2px]" />
              <Drop t="自定义线" w="w-[72px]" tcls="ml-[2px]" />
              <Drop t="ZDYX-90" w="w-[70px]" tcls="ml-[2px]" />
              <Sep w="w-[8px]" />
              <div className="w-[6px]" />
              <Tool i="prop" t="属性" w="w-[47px]" />
              <Tool i="edit" t="编辑钢筋" w="w-[75px]" sel />
              <div className="w-[3px]" />
              <Tool i="list" t="构件列表" w="w-[76px]" />
              <Tool i="pick" t="拾取构件" w="w-[66px]" />
            </Bar>
            <Bar cls="w-[420px] h-[27px] ml-[73px] pl-[1px]">
              <Grip />
              <div className="w-[2px]" />
              <Tool i="two" t="两点" w="w-[50px]" />
              <Tool i="para" t="平行" w="w-[52px]" />
              <Tool i="ang" t="点角" w="w-[63px]" caret />
              <Tool i="arc3" t="三点辅轴" w="w-[86px]" caret />
              <Tool i="delx" t="删除辅轴" w="w-[75px]" />
              <Tool i="dim" t="尺寸标注" w="w-[84px]" caret />
            </Bar>
          </div>
          <div className="h-[29px] flex items-start shrink-0">
            <Bar cls="w-[489px] h-[27px] ml-px pl-[1px]">
              <Grip />
              <div className="w-[6px]" />
              <Tool t="选择" w="w-[59px]" caret g={<Ico n="arrow" cls="-ml-[2px] -mr-[2px]" />} />
              <Sep w="w-[8px]" />
              <Tool i="line" t="直线" w="w-[49px]" />
              <Tool i="plen" t="点加长度" w="w-[76px]" />
              <Tool i="arc" t="三点画弧" w="w-[84px]" caret />
              <Drop t="" w="w-[60px]" />
              <div className="w-px" />
              <Tool i="rect" t="矩形" w="w-[47px]" />
              <Sep w="w-[9px]" />
              <Tool i="smart" t="智能布置" w="w-[80px]" caret />
            </Bar>
            <Bar cls="w-[27px] h-[27px] ml-[4px]">
              <Grip />
              <div className="w-[20px] h-[24px] bg-white" />
            </Bar>
          </div>
          {/* viewport */}
          <div className="h-[305px] shrink-0 relative bg-black">
            <Scene />
            <span className={AX + " left-[60px] top-[203px] text-[#1a80ff]"}>Z</span>
            <span className={AX + " left-[26px] top-[236px] text-[#20e020]"}>Y</span>
            <span className={AX + " left-[60px] top-[236px] text-[#ff2020]"}>X</span>
            <div className="absolute left-[10px] top-[3px] w-[166px] h-[177px] bg-white border-r border-b border-[#777] shadow-[1px_1px_2px_rgba(0,0,0,0.6)] flex flex-col">
              <div className="h-[32px] flex items-center pl-[7px] text-[12px] text-[#a8a8a8] shrink-0">钢筋显示控制面板</div>
              <div className="flex-1 border-2 border-[#a0a0a8] pl-[2px] text-[12px] text-black flex flex-col">
                <div className="-mt-px" />
                <Chk t="水平纵筋" /><Chk t="横向钢筋" /><Chk t="显示其它图元" /><Chk t="显示详细公式" />
              </div>
            </div>
          </div>
          {/* snap bar */}
          <div className="h-[32px] flex items-start shrink-0 pl-[213px]">
            <Bar cls="h-[28px] w-[261px] pl-px">
              <Grip />
              <div className="w-[3px]" />
              <Tool i="cross" t="交点" w="w-[47px]" />
              <Tool i="perp" t="垂点" w="w-[51px]" sel />
              <Tool i="mid" t="中点" w="w-[51px]" sel />
              <div className="w-[4px]" />
              <Tool i="pent" t="顶点" w="w-[51px]" />
              <Tool i="coord" t="坐标" w="w-[47px]" />
            </Bar>
            <Bar cls="h-[28px] w-[410px] ml-px pl-[1px]">
              <Grip />
              <div className="w-[1px]" />
              <Drop t="不偏移" w="w-[58px]" />
              <Sep w="w-[10px]" />
              <div className="w-[1px]" />
              <span className="text-[12px] text-[#999] w-[18px] shrink-0" style={{ fontFamily: "'Liberation Sans',sans-serif" }}>X=</span>
              <NumIn v="0" w="w-[57px]" />
              <span className="text-[12px] text-[#999] ml-[3px] w-[26px] shrink-0" style={{ fontFamily: "'Liberation Sans',sans-serif" }}>mm</span>
              <span className="text-[12px] text-[#999] w-[18px] shrink-0" style={{ fontFamily: "'Liberation Sans',sans-serif" }}>Y=</span>
              <NumIn v="0" w="w-[58px]" />
              <span className="text-[12px] text-[#999] ml-[2px] w-[22px] shrink-0" style={{ fontFamily: "'Liberation Sans',sans-serif" }}>mm</span>
              <Sep w="w-[5px]" />
              <div className="w-[11px] h-[11px] border border-[#888] bg-white shrink-0 ml-[1px]" />
              <span className="ml-[10px] text-[12px] text-black w-[28px] shrink-0">旋转</span>
              <NumIn v="0.000" w="w-[68px]" />
              <span className="text-[12px] text-[#888] ml-[3px] -mt-[6px]">°</span>
            </Bar>
          </div>
          {/* grid panel */}
          <div className="flex-1 flex min-h-0">
            <div className="w-[13px] shrink-0 flex flex-col items-center bg-[#f0f0f0] relative">
              <svg viewBox="0 0 11 9" className="w-[11px] h-[9px] mt-[3px] shrink-0"><rect x="0.5" y="0.5" width="10" height="8" fill="#ddd" stroke="#955" /><path d="M1 1l9 7M10 1L1 8" stroke="#c33" /></svg>
              <div className="flex-1 w-[8px] mt-[2px] bg-[radial-gradient(#aaa_1px,transparent_1px)] bg-[length:4px_4px]" />
            </div>
            <div className="flex-1 flex flex-col min-w-0 pt-[3px]">
              <div className="h-[22px] shrink-0 bg-white flex items-center pl-[2px] ml-px">
                <Ico n="first" cls="ml-[2px]" />
                <Ico n="prev" cls="ml-[7px]" />
                <Ico n="next" cls="ml-[7px]" />
                <Ico n="last" cls="ml-[8px]" />
                <Sep w="w-[6px] ml-[2px]" />
                <Ico n="up" cls="ml-[2px]" />
                <Ico n="down" cls="ml-[7px]" />
                <Sep w="w-[12px] ml-[2px]" />
                <Tool i="ins" t="插入" w="w-[52px]" dis />
                <Tool i="rm" t="删除" w="w-[51px]" dis />
                <Tool i="scl" t="缩尺配筋" w="w-[74px]" dis />
                <Tool i="info" t="钢筋信息" w="w-[75px]" />
                <Tool i="lib" t="钢筋图库" w="w-[75px]" />
                <Tool i="other" t="其他" w="w-[61px]" caret />
                <span className="text-[12px] text-black w-[24px] shrink-0">关闭</span>
                <Sep w="w-[14px]" />
                <span className="text-[12px] text-black whitespace-nowrap ml-[1px]">单构件钢筋总重(kg)：18.707</span>
              </div>
              <Grid />
            </div>
          </div>
        </div>
      </div>
      {/* status */}
      <div className="h-[23px] shrink-0 flex items-center gap-[2px] border-t-[2px] border-[#c8c8c8]">
        <StatusCell t="X=54908 Y=133" w="w-[148px]" />
        <StatusCell t="层高:2.8m" w="w-[78px]" />
        <StatusCell t="底标高:20.35m" w="w-[98px]" />
        <StatusCell t="1(1)" w="w-[48px]" />
        <StatusCell t="" w="w-[914px]" />
        <StatusCell t="183.9 FPS" w="w-[68px]" />
      </div>
      {/* taskbar */}
      <div className="h-[40px] shrink-0 flex bg-[#05111a] text-white">
        <Tb w="w-[48px]" cls="bg-black">
          <svg viewBox="0 0 16 16" className="w-[16px] h-[16px]"><path d="M0 2.5l7-1v6H0zM8 1.3L16 0v7.5H8zM0 8.5h7v6l-7-1zM8 8.5h8V16l-8-1.3z" fill="#fff" /></svg>
        </Tb>
        <div className="w-[344px] shrink-0 bg-[#333333] flex items-center pl-[9px]">
          <span className="w-[19px] h-[19px] rounded-full border-[3px] border-[#ddd]" />
          <span className="ml-[7px] text-[13px] text-[#9a9a9a] flex-1">在这里输入你要搜索的内容</span>
          <Mic size={17} color="#8a8a8a" className="mr-[12px]" />
        </div>
        <Tb w="w-[50px]"><svg viewBox="0 0 20 16" className="w-[20px] h-[16px]"><rect x="5" y="1" width="10" height="14" fill="none" stroke="#fff" /><path d="M3 3H1v10h2M17 3h2v10h-2" fill="none" stroke="#fff" /></svg></Tb>
        <Tb w="w-[50px]"><svg viewBox="0 0 22 22" className="w-[22px] h-[22px]"><path d="M11 11C6 9 3 7 4 3c3-3 7-2 7 8zM11 11c5-2 8-4 7-8-3-3-7-2-7 8zM11 11c-5 2-8 4-7 8 3 3 7 2 7-8zM11 11c5 2 8 4 7 8-3 3-7 2-7-8z" fill="#ddd" /></svg></Tb>
        <Tb w="w-[52px]"><svg viewBox="0 0 22 24" className="w-[22px] h-[24px]"><path d="M17 17c-2 3-10 3-11-2v-2h13c1-7-3-9-7-9S3 7 3 12c0 8 9 10 14 7zM7 10c0-4 8-4 8 0z" fill="#eee" /><path d="M2 20C1 14 14 3 21 2" stroke="#999" fill="none" /></svg></Tb>
        <Tb w="w-[50px]"><svg viewBox="0 0 26 24" className="w-[26px] h-[24px]"><circle cx="10" cy="13" r="8" fill="none" stroke="#bbb" strokeWidth="1.6" /><circle cx="10" cy="13" r="4" fill="none" stroke="#999" /><path d="M15 10c0-7 7-7 7 0l1 3h-9z" fill="#f0b020" /></svg></Tb>
        <Tb w="w-[46px]"><svg viewBox="0 0 22 22" className="w-[22px] h-[22px]"><path d="M3 12C3 3 19 1 20 12H8c0 5 7 6 11 3v4c-7 4-16 1-16-7zM8 9h7c-1-3-6-3-7 0z" fill="#0a78d7" /></svg></Tb>
        <Tb w="w-[43px]"><svg viewBox="0 0 26 26" className="w-[26px] h-[26px]"><path d="M5 13C5 5 19 3 20 13H10c0 5 6 6 10 3v4c-6 4-15 1-15-7zM10 10h6c-1-2-5-2-6 0z" fill="#2a9ae0" /><path d="M3 22C1 15 16 2 24 3c1 3-3 8-6 10" stroke="#e8c030" strokeWidth="1.6" fill="none" /></svg></Tb>
        <Tb w="w-[35px]" cls="mx-[4px] border-b-[2px] border-[#76b9ed]"><svg viewBox="0 0 22 22" className="w-[22px] h-[22px]"><path d="M1 4h8l2 3h10v13H1z" fill="#f5d06a" /><rect x="1" y="10" width="20" height="10" fill="#fbe5a0" /><rect x="8" y="13" width="6" height="5" fill="#3f9fe0" /></svg></Tb>
        <Tb w="w-[36px]" cls="mx-[4px] border-b-[2px] border-[#76b9ed]"><svg viewBox="0 0 24 26" className="w-[24px] h-[26px]"><path d="M4 13C4 4 12 1 20 3c-3 3-2 6 1 9 0 8-5 12-9 12S4 19 4 13zM8 14h8l-4 5zM9 11l3-4 3 4z" fill="#1a90f0" fillRule="evenodd" /></svg></Tb>
        <Tb w="w-[35px]" cls="mx-[4px] border-b-[2px] border-[#76b9ed]"><svg viewBox="0 0 24 24" className="w-[24px] h-[24px]"><rect width="24" height="24" rx="2" fill="#e8951e" /><rect x="4" y="5" width="14" height="16" fill="#fbf0c8" /><path d="M6 9h10M6 12h10M6 15h7" stroke="#a66" /><path d="M10 19L21 6" stroke="#a02020" strokeWidth="2" /></svg></Tb>
        <Tb w="w-[36px]" cls="mx-[4px] border-b-[2px] border-[#76b9ed]"><svg viewBox="0 0 24 26" className="w-[24px] h-[26px]"><circle cx="12" cy="14" r="10" fill="#7fce3c" stroke="#d8f0c0" /><path d="M7 12l5-4 5 4zM7 17l5 4 5-4z" fill="#fff" /><path d="M7 14h10" stroke="#fff" strokeWidth="1.5" /></svg></Tb>
        <Tb w="w-[42px]" cls="bg-[#2f3a42] border-b-[2px] border-[#76b9ed]"><svg viewBox="0 0 24 24" className="w-[24px] h-[24px]"><rect width="24" height="24" rx="4" fill="#1890f0" /><path d="M12 4v16M4 10h16M7 7c0 7 10 7 10 0" stroke="#fff" strokeWidth="2" fill="none" /></svg></Tb>
        <Tb w="w-[50px]" cls="text-[12px] text-[#ddd]">链接</Tb>
        <div className="w-[64px] shrink-0 flex flex-col items-center justify-center text-[12px] leading-[18px] text-[#eee]">
          <span>53%</span><span className="whitespace-nowrap">CPU使用</span>
        </div>
        <div className="w-[11px] shrink-0" />
        <Tb w="w-[28px]"><svg viewBox="0 0 20 16" className="w-[20px] h-[16px]"><path d="M1 6c5-5 13-5 18 0M4 9c3-3 9-3 12 0M7 12c2-1 4-1 6 0" stroke="#7ed321" strokeWidth="2" fill="none" /><circle cx="10" cy="15" r="1" fill="#7ed321" /></svg></Tb>
        <Tb w="w-[26px]"><svg viewBox="0 0 14 8" className="w-[12px] h-[8px]"><path d="M1 7l6-6 6 6" stroke="#fff" fill="none" /></svg></Tb>
        <Tb w="w-[24px]"><svg viewBox="0 0 18 14" className="w-[17px] h-[13px]"><rect x="4" y="4" width="12" height="8" fill="none" stroke="#fff" /><rect x="5" y="5" width="8" height="6" fill="#fff" /><path d="M1 1h5v3M3 1v-1" stroke="#fff" /></svg></Tb>
        <Tb w="w-[24px]"><svg viewBox="0 0 16 16" className="w-[14px] h-[14px]"><path d="M1 15C1 8 8 1 15 1M5 15c0-5 5-10 10-10M9 15c0-3 3-6 6-6" stroke="#ccc" fill="none" /></svg></Tb>
        <Tb w="w-[24px]"><svg viewBox="0 0 18 16" className="w-[16px] h-[15px]"><path d="M1 5h3l5-4v14l-5-4H1z" fill="none" stroke="#fff" /><path d="M12 5a4 4 0 0 1 0 6M14 3a7 7 0 0 1 0 10" stroke="#ccc" fill="none" /></svg></Tb>
        <Tb w="w-[34px]"><Keyboard size={22} color="#fff" strokeWidth={1.2} /></Tb>
        <Tb w="w-[22px]" cls="text-[17px]"><span style={{ fontFamily: "'Liberation Sans',sans-serif" }}>A</span></Tb>
        <Tb w="w-[34px]"><span className="w-[15px] h-[18px] bg-[#ee4a22] rounded-[3px] flex items-center justify-center text-[13px] font-bold leading-none" style={{ fontFamily: "'Liberation Sans',sans-serif" }}>S</span></Tb>
        <div className="w-[72px] shrink-0 flex flex-col items-center justify-center text-[12.5px] leading-[19px] text-[#eee] whitespace-nowrap" style={{ fontFamily: "'Open Sans',sans-serif" }}>
          <span>12:43</span><span>2018/6/13</span>
        </div>
        <Tb w="flex-1" cls="bg-black pr-[12px]"><svg viewBox="0 0 16 16" className="w-[16px] h-[16px]"><path d="M1 1h14v11H10l-2 3-2-3H1z" fill="none" stroke="#fff" /></svg></Tb>
      </div>
      {/* floating overlays */}
      <div className="absolute left-[1008px] -top-[30px] w-[48px] h-[48px] rounded-full bg-gradient-to-b from-[#63e06a] to-[#22b83a] border-[2px] border-[#cfcfcf] flex items-end justify-center text-white font-bold text-[13px] leading-[17px]" style={{ fontFamily: "'Liberation Sans',sans-serif" }}>59</div>
      <div className="absolute left-[876px] top-[22px] w-[119px] h-[48px] rounded-[24px] bg-white shadow-[0_1px_3px_rgba(0,0,0,0.25)] flex items-center">
        <div className="ml-[6px] w-[38px] h-[38px] rounded-full bg-[#2ecb75] flex items-center justify-center">
          <svg viewBox="0 0 22 18" className="w-[22px] h-[18px]"><path d="M2 7c5-5 13-5 18 0M5 11c3-3 9-3 12 0M8 14c2-1 4-1 6 0" stroke="#fff" strokeWidth="2" fill="none" /><circle cx="11" cy="16.5" r="1.4" fill="#fff" /></svg>
        </div>
        <div className="ml-[5px] w-[8px] h-[12px] mt-[18px] border border-[#22c070] bg-[#22c070]" />
        <span className="ml-[5px] mt-[18px] text-[10px] text-[#555]" style={{ fontFamily: "'Liberation Sans',sans-serif" }}>0</span>
      </div>
      <div className="absolute left-[787px] top-[16px] w-[189px] h-[24px] bg-white border border-[#c0d4e6] flex items-center pl-[14px] gap-[6px] text-[#1e7ad0]">
        <span className="text-[18px] leading-none w-[16px] font-semibold" style={{ fontFamily: "'Liberation Sans',sans-serif" }}>A</span>
        <span className="w-[16px] text-[14px] leading-none font-bold text-center" style={{ fontFamily: "'Liberation Sans',sans-serif" }}>•,</span>
        <Smile size={16} /><Mic size={16} /><Keyboard size={16} /><User size={16} color="#b8c4d0" /><Shirt size={16} fill="#1e7ad0" /><Wrench size={16} fill="#1e7ad0" />
      </div>
      <div className="absolute left-[771px] top-[17px] w-[24px] h-[23px] bg-[#ee4a22] rounded-[4px] -rotate-[8deg] flex items-center justify-center text-white text-[20px] font-bold leading-none" style={{ fontFamily: "'Liberation Sans',sans-serif" }}>S</div>
    </div>
  );
}
